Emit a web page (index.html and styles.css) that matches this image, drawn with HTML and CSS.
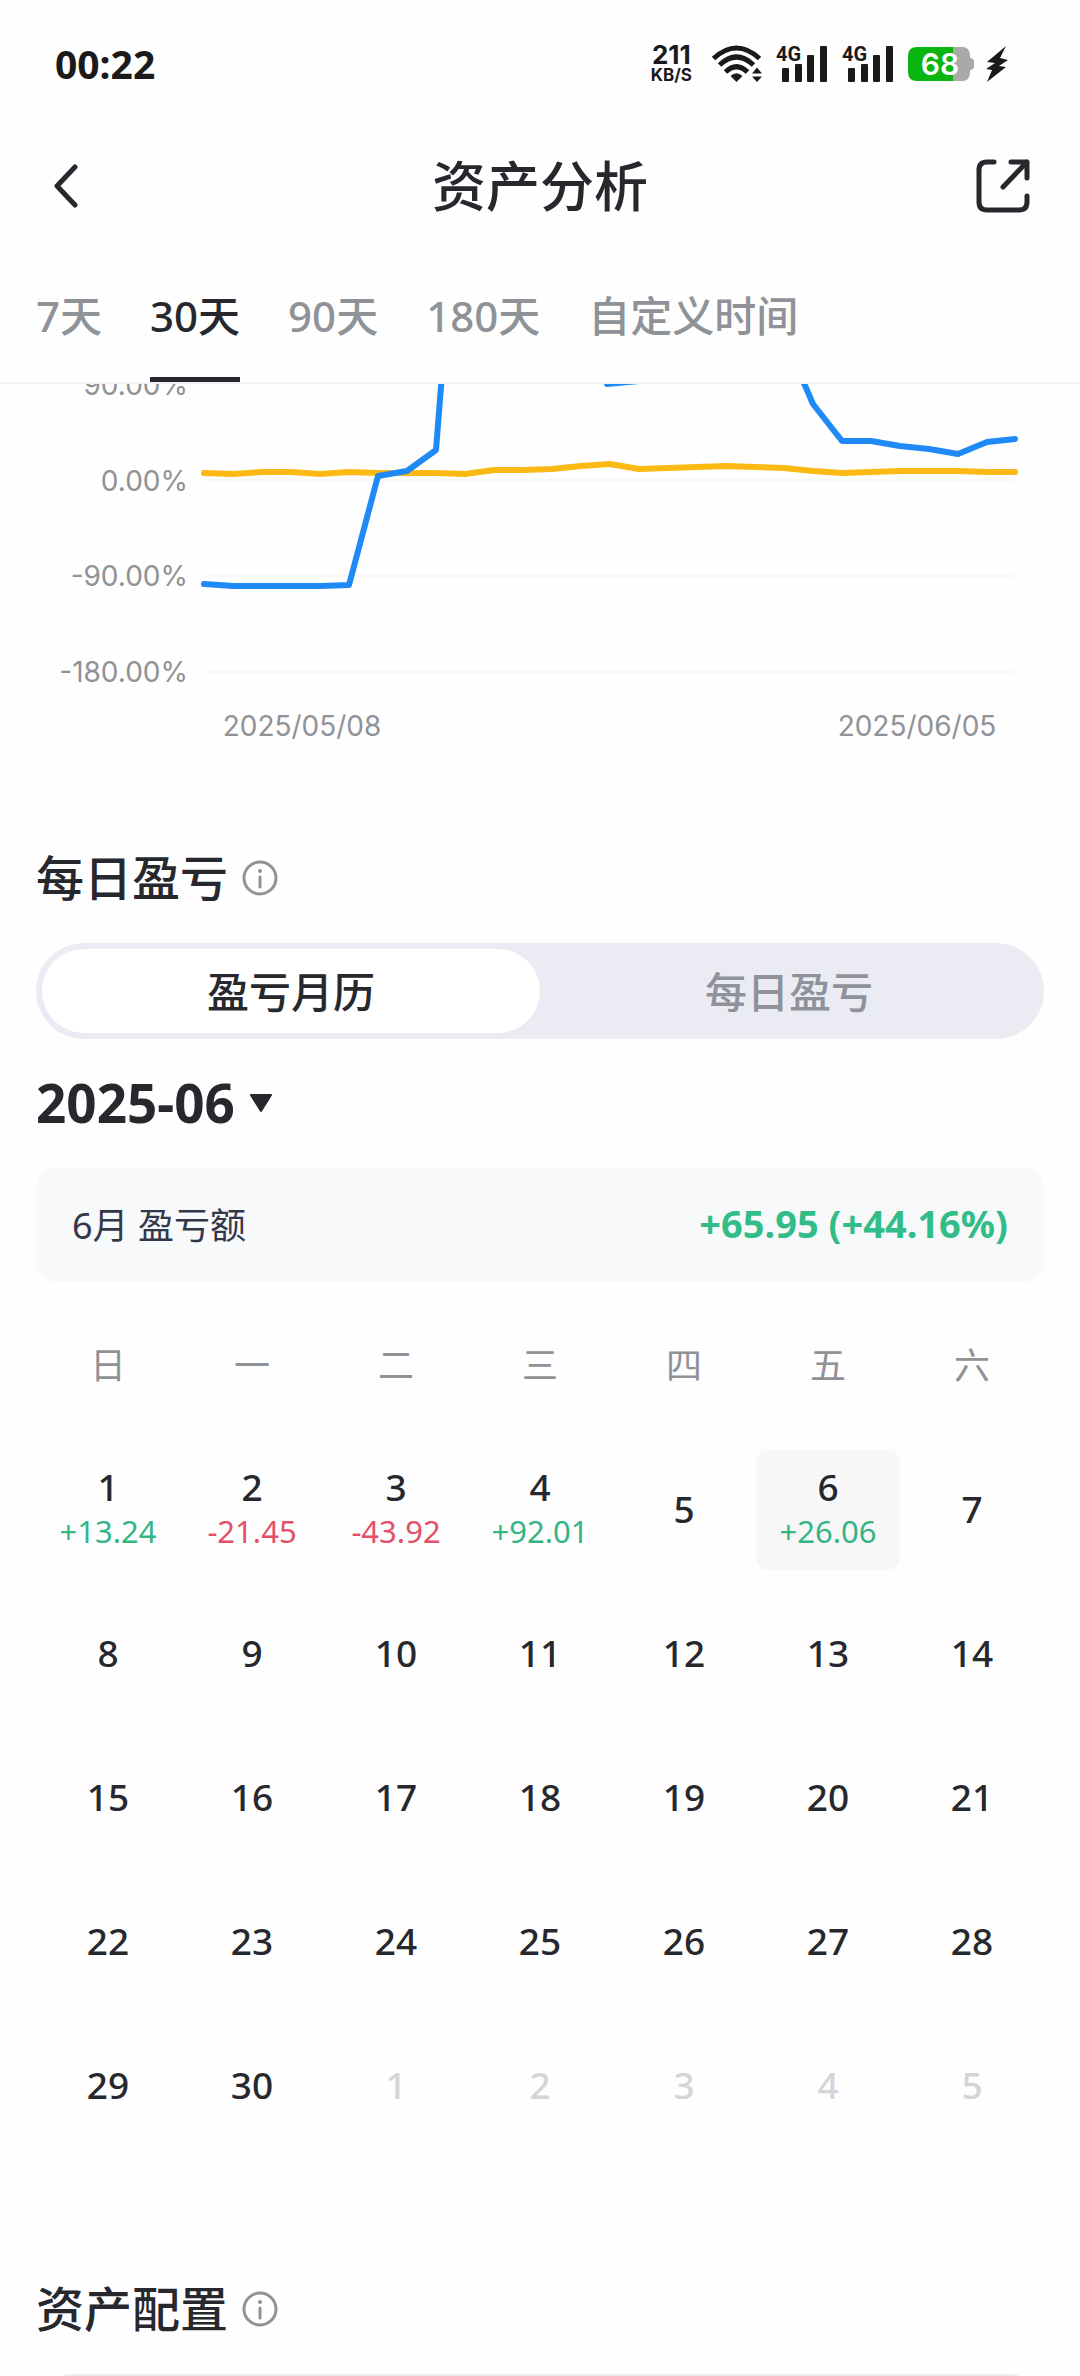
FILE: index.html
```html
<!DOCTYPE html>
<html lang="zh-CN">
<head>
  <meta charset="UTF-8" />
  <meta name="viewport" content="width=device-width, initial-scale=1.0"/>
  <title>资产分析</title>
  <link rel="stylesheet" href="styles.css">
</head>
<body>
  <div class="status-bar">
    <span class="clock">00:22</span>
    <div class="status-icons">
      <div class="net-speed">
        <span class="net-value">211</span>
        <span class="net-unit">KB/S</span>
      </div>
      <svg class="wifi" viewBox="0 0 50 38" width="50" height="38" aria-hidden="true">
        <g fill="none" stroke="#1a1a1a" stroke-width="5">
          <path d="M1.500 13.500 Q24.500 -7.500 47.500 13.500"/>
          <path d="M7.500 20 Q24.500 4 41.500 20"/>
          <path d="M13.500 27 Q24.500 16.500 35.500 27"/>
        </g>
        <path d="M18.500 31 Q24.500 25.500 30.500 31 L24.500 37 Z" fill="#1a1a1a"/>
        <path d="M45 22.500 L50 28.500 H40 Z M40 31.500 H50 L45 37 Z" fill="#1a1a1a"/>
      </svg>
      <svg class="signal" viewBox="0 0 52 38" width="52" height="38" aria-hidden="true">
        <text x="0" y="16" class="signal-label">4G</text>
        <g fill="#1a1a1a">
          <rect x="6" y="23" width="7" height="14" rx="1"/>
          <rect x="19" y="19" width="7" height="18" rx="1"/>
          <rect x="31" y="10" width="7" height="27" rx="1"/>
          <rect x="44" y="1" width="7" height="36" rx="1"/>
        </g>
      </svg>
      <svg class="signal" viewBox="0 0 52 38" width="52" height="38" aria-hidden="true">
        <text x="0" y="16" class="signal-label">4G</text>
        <g fill="#1a1a1a">
          <rect x="6" y="23" width="7" height="14" rx="1"/>
          <rect x="19" y="19" width="7" height="18" rx="1"/>
          <rect x="31" y="10" width="7" height="27" rx="1"/>
          <rect x="44" y="1" width="7" height="36" rx="1"/>
        </g>
      </svg>
      <svg class="battery" viewBox="0 0 66 34" width="66" height="34">
        <path d="M45 0 H54 Q62 0 62 9 V11 Q66 11 66 15 V19 Q66 23 62 23 V25 Q62 34 54 34 H45 Z" fill="#a9a9a9"/>
        <path d="M9 0 H45 V34 H9 Q0 34 0 25 V9 Q0 0 9 0 Z" fill="#0bb50f"/>
        <text x="32" y="28" text-anchor="middle" class="battery-label">68</text>
      </svg>
      <svg class="bolt" viewBox="0 0 22 36" width="22" height="36" aria-hidden="true">
        <path d="M20 0 L1 16 L9 17 L0 23 L6 24 L1 36 L20 21 L13 20 L22 14 L14 12 Z" fill="#1a1a1a"/>
      </svg>
    </div>
  </div>

  <header class="page-header">
    <button type="button" class="icon-button" aria-label="返回">
      <svg viewBox="0 0 24 44" width="24" height="44">
        <path d="M21 3 L3 22 L21 41" fill="none" stroke="#26282e" stroke-width="5" stroke-linecap="round" stroke-linejoin="round"/>
      </svg>
    </button>
    <h1>资产分析</h1>
    <button type="button" class="icon-button" aria-label="分享">
      <svg viewBox="0 0 54 54" width="54" height="54">
        <g fill="none" stroke="#26282e" stroke-width="5" stroke-linecap="round" stroke-linejoin="round">
          <path d="M18 3 H11 Q3 3 3 11 V43 Q3 51 11 51 H43 Q51 51 51 43 V37"/>
          <path d="M35 3 H51 V19 M51 3 L27 28"/>
        </g>
      </svg>
    </button>
  </header>

  <nav class="tabs">
    <button type="button" class="tab">7天</button>
    <button type="button" class="tab active">30天</button>
    <button type="button" class="tab">90天</button>
    <button type="button" class="tab">180天</button>
    <button type="button" class="tab">自定义时间</button>
  </nav>

  <main class="content">
    <svg class="chart" viewBox="0 384 1080 390">
      <g class="grid-lines">
        <path d="M204 480 H1015 M204 576 H1015 M204 672 H1015"/>
      </g>
      <g class="axis-label" text-anchor="end">
        <text x="188" y="395">90.00%</text>
        <text x="188" y="491">0.00%</text>
        <text x="188" y="586">-90.00%</text>
        <text x="188" y="682">-180.00%</text>
      </g>
      <g class="axis-label" text-anchor="middle">
        <text x="302" y="736">2025/05/08</text>
        <text x="917" y="736">2025/06/05</text>
      </g>
      <polyline class="line line-btc" points="204,473 233,474 262,472 291,472 320,474 349,472 378,473 407,473 436,473 465,474 494,470 523,470 552,469 581,466 610,464 639,469 668,468 697,467 726,466 755,467 784,468 813,471 842,473 871,472 900,471 929,471 958,471 987,472 1015,472"/>
      <polyline class="line line-asset" points="204,584 233,586 262,586 291,586 320,586 349,585 378,476 407,471 436,450 442,374"/>
      <polyline class="line line-asset" points="607,384 639,381"/>
      <polyline class="line line-asset" points="800,374 813,404 842,441 871,441 900,446 929,449 958,454 987,442 1015,439"/>
    </svg>

    <section class="daily">
      <h2 class="section-title">每日盈亏
        <svg viewBox="0 0 36 36" width="36" height="36" aria-hidden="true">
          <circle cx="18" cy="18" r="16" fill="none" stroke="#8f9297" stroke-width="3"/>
          <circle cx="18" cy="11" r="2" fill="#8f9297"/>
          <path d="M18 17 V27" stroke="#8f9297" stroke-width="3" stroke-linecap="round"/>
        </svg>
      </h2>

      <div class="segmented">
        <button type="button" class="segment selected">盈亏月历</button>
        <button type="button" class="segment">每日盈亏</button>
      </div>

      <div class="month-picker">
        <select id="month" aria-label="月份">
          <option>2025-06</option>
        </select>
        <svg viewBox="0 0 24 18" width="24" height="18" aria-hidden="true">
          <path d="M2 1 H22 L12 17 Z" fill="#26282e" stroke="#26282e" stroke-width="2" stroke-linejoin="round"/>
        </svg>
      </div>

      <div class="month-total">
        <span>6月 盈亏额</span>
        <strong>+65.95 (+44.16%)</strong>
      </div>

      <table class="calendar">
        <thead>
          <tr><th>日</th><th>一</th><th>二</th><th>三</th><th>四</th><th>五</th><th>六</th></tr>
        </thead>
        <tbody id="calendarBody"></tbody>
      </table>
    </section>

    <section class="allocation">
      <h2 class="section-title">资产配置
        <svg viewBox="0 0 36 36" width="36" height="36" aria-hidden="true">
          <circle cx="18" cy="18" r="16" fill="none" stroke="#8f9297" stroke-width="3"/>
          <circle cx="18" cy="11" r="2" fill="#8f9297"/>
          <path d="M18 17 V27" stroke="#8f9297" stroke-width="3" stroke-linecap="round"/>
        </svg>
      </h2>
      <div class="allocation-card"></div>
    </section>
  </main>

  <script>
    const profits = { 1: "+13.24", 2: "-21.45", 3: "-43.92", 4: "+92.01", 6: "+26.06" };
    const daysInMonth = 30;
    const today = 6;

    let rows = "";
    for (let week = 0; week < 5; week++) {
      rows += "<tr>";
      for (let i = 1; i <= 7; i++) {
        const n = week * 7 + i;
        const outside = n > daysInMonth;
        const day = outside ? n - daysInMonth : n;
        const profit = outside ? "" : profits[n];
        let cls = "day";
        if (outside) cls += " outside";
        if (n === today) cls += " today";
        rows += `<td><div class="${cls}"><span>${day}</span>`;
        if (profit) {
          rows += `<span class="profit ${profit[0] === "+" ? "up" : "down"}">${profit}</span>`;
        }
        rows += "</div></td>";
      }
      rows += "</tr>";
    }
    document.getElementById("calendarBody").innerHTML = rows;
  </script>
</body>
</html>
```

FILE: styles.css
```css
* {
  box-sizing: border-box;
}
body {
  font-family: "Noto Sans", "Noto Sans CJK SC", sans-serif;
  background-color: #fefefe;
  color: #26282e;
  margin: 0;
  height: 100vh;
  display: flex;
  flex-direction: column;
}
button, select {
  font-family: inherit;
  color: inherit;
  background: none;
  border: none;
  padding: 0;
  margin: 0;
  cursor: pointer;
}
svg {
  display: block;
  flex: none;
}

.status-bar {
  display: flex;
  justify-content: space-between;
  align-items: center;
  height: 126px;
  padding: 0 72px 0 55px;
  color: #1a1a1a;
}
.status-bar svg {
  overflow: visible;
}
.clock {
  font-size: 39px;
  font-weight: 700;
}
.status-icons {
  display: flex;
  align-items: center;
  padding-top: 2px;
}
.net-speed {
  display: flex;
  flex-direction: column;
  align-items: center;
  font-family: Inter, sans-serif;
  font-weight: 700;
  margin-right: 20px;
}
.net-value {
  font-size: 26px;
  line-height: 22px;
}
.net-unit {
  font-size: 17px;
  line-height: 18px;
}
.wifi {
  margin-right: 14px;
}
.signal {
  margin-right: 14px;
}
.signal-label {
  font-family: Roboto, sans-serif;
  font-size: 20px;
  font-weight: 700;
  fill: #1a1a1a;
}
.battery {
  margin-right: 12px;
}
.battery-label {
  font-family: Inter, sans-serif;
  font-size: 30px;
  font-weight: 600;
  fill: #fff;
}

.page-header {
  display: flex;
  justify-content: space-between;
  align-items: center;
  height: 120px;
  padding: 0 50px;
}
h1 {
  margin: 0;
  font-size: 54px;
  line-height: 72px;
  font-weight: 500;
}
.icon-button {
  display: flex;
  align-items: center;
  min-width: 60px;
  height: 72px;
}
.icon-button svg {
  margin: 0 auto 0 4px;
}
.page-header .icon-button:last-child svg {
  margin: 0 0 0 auto;
}

.tabs {
  display: flex;
  gap: 48px;
  height: 138px;
  padding: 0 36px;
  border-bottom: 2px solid #f0f1f2;
}
.tab {
  font-size: 42px;
  font-weight: 500;
  line-height: 60px;
  padding: 8px 0 0;
  color: #8f9297;
  white-space: nowrap;
  border-bottom: 5px solid transparent;
}
.tab.active {
  color: #26282e;
  border-bottom-color: #26282e;
}

.content {
  flex: 1;
  min-height: 0;
  overflow-y: auto;
  scrollbar-width: none;
}
.chart {
  width: 100%;
}
.grid-lines {
  stroke: #f6f7f7;
  stroke-width: 2;
}
.axis-label {
  font-family: Inter, sans-serif;
  font-size: 28px;
  fill: #8f9297;
}
.line {
  fill: none;
  stroke-width: 6;
  stroke-linejoin: round;
  stroke-linecap: round;
}
.line-btc {
  stroke: #fcb813;
}
.line-asset {
  stroke: #1f8af5;
}

.daily, .allocation {
  padding: 0 36px;
}
.daily {
  padding-top: 68px;
}
.section-title {
  display: flex;
  align-items: center;
  gap: 14px;
  margin: 0;
  font-size: 48px;
  line-height: 72px;
  font-weight: 500;
}

.segmented {
  display: flex;
  height: 96px;
  margin-top: 29px;
  padding: 6px;
  border-radius: 48px;
  background-color: #ebecf3;
}
.segment {
  flex: 1;
  padding-bottom: 4px;
  border-radius: 42px;
  font-size: 42px;
  font-weight: 500;
  color: #8f929b;
}
.segment.selected {
  background-color: #fff;
  color: #26282e;
}

.month-picker {
  display: flex;
  align-items: center;
  gap: 14px;
  margin-top: 28px;
  height: 72px;
}
.month-picker select {
  appearance: none;
  font-size: 53px;
  line-height: 72px;
  font-weight: 700;
}

.month-total {
  display: flex;
  justify-content: space-between;
  align-items: center;
  height: 114px;
  margin-top: 29px;
  padding: 0 36px 4px;
  border-radius: 20px;
  background-color: #f8f9fb;
  font-size: 36px;
  color: #33374a;
}
.month-total strong {
  font-size: 38px;
  color: #32bd88;
}

.calendar {
  width: 100%;
  margin-top: 48px;
  border-collapse: collapse;
  table-layout: fixed;
}
.calendar th {
  height: 72px;
  padding: 0;
  font-size: 36px;
  line-height: 48px;
  font-weight: 400;
  color: #8f9297;
}
.calendar td {
  padding: 24px 0 0;
}
.calendar tr:first-child td {
  padding-top: 48px;
}
.day {
  display: flex;
  flex-direction: column;
  align-items: center;
  justify-content: center;
  height: 120px;
  padding-bottom: 2px;
  border-radius: 12px;
  font-size: 37px;
  line-height: 44px;
  font-weight: 500;
}
.day.today {
  background-color: #f7f7f7;
}
.day.outside {
  color: #d3d5d8;
}
.profit {
  font-size: 31px;
  font-weight: 400;
}
.up {
  color: #36b486;
}
.down {
  color: #e2506a;
}

.allocation {
  padding-top: 127px;
}
.allocation-card {
  height: 480px;
  margin-top: 29px;
  border: 2px solid #ededee;
  border-radius: 36px;
}
```
